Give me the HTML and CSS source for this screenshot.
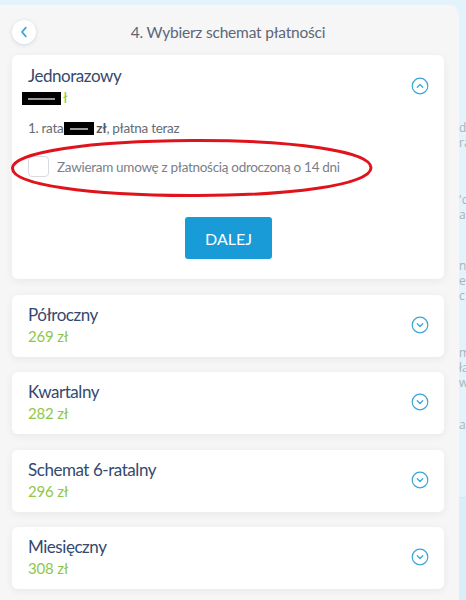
FILE: index.html
```html
<!DOCTYPE html>
<html lang="pl">
<head>
    <meta charset="UTF-8">
    <meta name="viewport" content="width=device-width, initial-scale=1.0">
    <title>Wybierz schemat płatności</title>
    <link rel="stylesheet" href="styles.css">
</head>
<body>
    <div class="page">
        <div class="panel">
            <div class="header">
                <button class="back-btn" aria-label="Wstecz">
                    <svg width="24" height="24" viewBox="0 0 24 24"><path d="M13.8 7.6 L10 12 L13.8 16.4" fill="none" stroke="#3aa6d5" stroke-width="1.8" stroke-linecap="round" stroke-linejoin="round"/></svg>
                </button>
                <h1 class="title">4. Wybierz schemat płatności</h1>
                <span></span>
            </div>

            <div class="plans">
                <div class="plan open">
                    <div class="plan-head">
                        <div>
                            <div class="plan-name">Jednorazowy</div>
                            <div class="plan-price"><span class="redact wide"></span>ł</div>
                        </div>
                        <svg class="toggle" width="18" height="18" viewBox="0 0 18 18"><circle cx="9" cy="9" r="7.8" fill="none" stroke="#3aa6d5" stroke-width="1.2"/><path d="M6.3 10.2 L9 7.5 L11.7 10.2" fill="none" stroke="#3aa6d5" stroke-width="1.3" stroke-linecap="round" stroke-linejoin="round"/></svg>
                    </div>
                    <div class="installment">1. rata<span class="redact"></span><b>zł</b>, płatna teraz</div>
                    <label class="agree">
                        <span class="checkbox"></span>
                        <span>Zawieram umowę z płatnością odroczoną o 14 dni</span>
                    </label>
                    <div class="actions">
                        <button class="btn">DALEJ</button>
                    </div>
                    <svg class="circled" width="364" height="62" viewBox="0 0 364 62"><path d="M182 3.5 C 282 3, 362 14, 361 31 C 360 48, 280 59, 180 58.5 C 80 58, 2 48, 2.5 31 C 3 15, 80 4, 182 3.5 Z" fill="none" stroke="#e0131c" stroke-width="3"/></svg>
                </div>

                <div class="plan">
                    <div>
                        <div class="plan-name">Półroczny</div>
                        <div class="plan-price">269 zł</div>
                    </div>
                    <svg class="toggle" width="18" height="18" viewBox="0 0 18 18"><circle cx="9" cy="9" r="7.8" fill="none" stroke="#3aa6d5" stroke-width="1.2"/><path d="M6.3 7.8 L9 10.5 L11.7 7.8" fill="none" stroke="#3aa6d5" stroke-width="1.3" stroke-linecap="round" stroke-linejoin="round"/></svg>
                </div>

                <div class="plan">
                    <div>
                        <div class="plan-name">Kwartalny</div>
                        <div class="plan-price">282 zł</div>
                    </div>
                    <svg class="toggle" width="18" height="18" viewBox="0 0 18 18"><circle cx="9" cy="9" r="7.8" fill="none" stroke="#3aa6d5" stroke-width="1.2"/><path d="M6.3 7.8 L9 10.5 L11.7 7.8" fill="none" stroke="#3aa6d5" stroke-width="1.3" stroke-linecap="round" stroke-linejoin="round"/></svg>
                </div>

                <div class="plan">
                    <div>
                        <div class="plan-name">Schemat 6-ratalny</div>
                        <div class="plan-price">296 zł</div>
                    </div>
                    <svg class="toggle" width="18" height="18" viewBox="0 0 18 18"><circle cx="9" cy="9" r="7.8" fill="none" stroke="#3aa6d5" stroke-width="1.2"/><path d="M6.3 7.8 L9 10.5 L11.7 7.8" fill="none" stroke="#3aa6d5" stroke-width="1.3" stroke-linecap="round" stroke-linejoin="round"/></svg>
                </div>

                <div class="plan">
                    <div>
                        <div class="plan-name">Miesięczny</div>
                        <div class="plan-price">308 zł</div>
                    </div>
                    <svg class="toggle" width="18" height="18" viewBox="0 0 18 18"><circle cx="9" cy="9" r="7.8" fill="none" stroke="#3aa6d5" stroke-width="1.2"/><path d="M6.3 7.8 L9 10.5 L11.7 7.8" fill="none" stroke="#3aa6d5" stroke-width="1.3" stroke-linecap="round" stroke-linejoin="round"/></svg>
                </div>
            </div>
        </div>

        <!-- fragment strony pod spodem -->
        <div class="behind">
            <p class="g1">do<br>ra</p>
            <p class="g2">'c<br>a</p>
            <p class="g3">n<br>e<br>c</p>
            <p class="g4">m<br>ła<br>w</p>
            <p class="g5">ag</p>
            <div class="behind-box"></div>
        </div>
    </div>
</body>
</html>
```

FILE: styles.css
```css
* {
    margin: 0;
    padding: 0;
    box-sizing: border-box;
}

body {
    background-color: #e3f3fb;
    font-family: 'Lato', 'Noto Sans', sans-serif;
    overflow: hidden;
}

.page {
    display: flex;
    height: 600px;
}

.panel {
    width: 459px;
    flex-shrink: 0;
    margin-top: 5px;
    padding: 15px 15px 0 12px;
    background-color: #f6f6f7;
    border-top-right-radius: 10px;
}

.header {
    display: grid;
    grid-template-columns: 24px 1fr 24px;
    align-items: center;
    margin-bottom: 11px;
}

.back-btn {
    width: 24px;
    height: 24px;
    border: none;
    border-radius: 50%;
    background-color: #fff;
    box-shadow: 0 1px 4px rgba(40, 80, 110, 0.18);
    display: flex;
    align-items: center;
    justify-content: center;
}

.title {
    text-align: center;
    font-size: 15.5px;
    font-weight: normal;
    letter-spacing: -0.2px;
    color: #5c6678;
}

.plans {
    display: flex;
    flex-direction: column;
    gap: 15.5px;
}

.plan {
    position: relative;
    background-color: #fff;
    border-radius: 6px;
    box-shadow: 0 2px 9px rgba(0, 0, 0, 0.06);
    padding: 9px 15px 11px 16px;
    display: flex;
    align-items: center;
    justify-content: space-between;
}

.plan.open {
    display: block;
    padding: 10px 15px 20px 16px;
}

.plan-head {
    display: flex;
    align-items: center;
    justify-content: space-between;
}

.plan-name {
    font-size: 17px;
    line-height: 22px;
    letter-spacing: -0.45px;
    color: #34496e;
}

.plan-price {
    font-size: 15px;
    line-height: 20px;
    letter-spacing: -0.2px;
    color: #8fc74a;
}

.redact {
    display: inline-block;
    width: 30px;
    height: 13px;
    background-color: #000;
    vertical-align: middle;
    position: relative;
    top: -1px;
}

.redact::after {
    content: '';
    position: absolute;
    left: 6px;
    right: 6px;
    top: 6px;
    height: 2px;
    background-color: #fff;
    opacity: 0.6;
}

.redact.wide {
    width: 39px;
    margin-left: -6px;
    margin-right: 2px;
}

.installment {
    margin-top: 11px;
    font-size: 13.5px;
    line-height: 20px;
    letter-spacing: -0.3px;
    color: #666c75;
}

.installment .redact {
    margin-left: 1px;
    margin-right: 2px;
}

.installment b {
    color: #555a62;
}

.agree {
    display: flex;
    align-items: center;
    gap: 8px;
    margin-top: 18px;
    font-size: 13.5px;
    letter-spacing: -0.3px;
    color: #7b8088;
}

.checkbox {
    width: 21px;
    height: 21px;
    border: 1px solid #d8dbdf;
    border-radius: 4px;
    background-color: #fff;
}

.actions {
    display: flex;
    justify-content: center;
    margin-top: 40px;
}

.btn {
    width: 87px;
    height: 42px;
    border: none;
    border-radius: 3px;
    background-color: #199bd8;
    color: #fff;
    font-family: 'Lato', sans-serif;
    font-size: 16px;
}

.circled {
    position: absolute;
    left: -2px;
    top: 82px;
}

.behind {
    flex: 1;
    overflow: hidden;
    white-space: nowrap;
    font-family: 'Open Sans', sans-serif;
    font-size: 12px;
    line-height: 15px;
    color: #a9b2ba;
    display: flex;
    flex-direction: column;
}

.behind p {
    flex-shrink: 0;
}

.g1 { margin-top: 120px; }
.g2 { margin-top: 42px; }
.g3 { margin-top: 36px; }
.g4 { margin-top: 42px; }
.g5 { margin-top: 27px; }

.behind-box {
    margin-top: 65px;
    flex: 1;
    border-top: 1px solid #d4e8f3;
    background-color: #d9eef9;
}
```
